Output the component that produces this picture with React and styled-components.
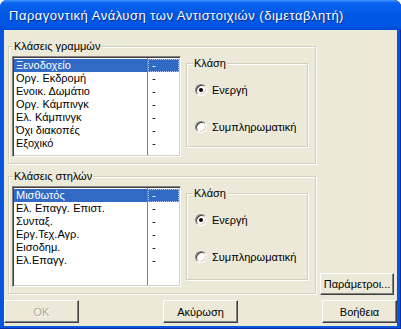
import React from 'react';
import styled, { createGlobalStyle } from 'styled-components';

const GlobalStyle = createGlobalStyle`
  html, body { margin: 0; padding: 0; background: #fff; }
  body { font-family: 'Liberation Sans', Arial, sans-serif; font-size: 11px; color: #000; }
  * { box-sizing: border-box; }
`;

const Window = styled.div`
  width: 401px;
  height: 329px;
  display: flex;
  flex-direction: column;
  background: #0855dd;
  border-radius: 7px 7px 0 0;
  overflow: hidden;
  box-shadow: inset 0 -1px 0 #0a2ea8, inset -1px 0 0 #0a2ea8;
`;

const TitleBar = styled.div`
  height: 30px;
  flex: none;
  display: flex;
  align-items: center;
  padding: 1px 0 0 9px;
  background: linear-gradient(to bottom, #3e93ff 0%, #0a63f0 10%, #0058e6 45%, #0056e4 85%, #004ad6 100%);
  color: #fff;
  font-size: 13px;
  letter-spacing: 0.5px;
  text-shadow: 1px 1px 0 #0c2a8a;
`;

const Client = styled.div`
  flex: 1;
  margin: 0 4px 4px 4px;
  background: #ece9d8;
  display: flex;
  flex-direction: column;
`;

const Main = styled.div`
  height: 270px;
  display: flex;
  padding: 16px 3px 0 4px;
`;

const LeftCol = styled.div`
  width: 308px;
  display: flex;
  flex-direction: column;
  gap: 12px;
`;

const RightCol = styled.div`
  flex: 1;
  display: flex;
  align-items: flex-end;
  justify-content: flex-end;
  padding-bottom: 5px;
`;

const Group = styled.div`
  position: relative;
  height: ${p => p.$h}px;
  width: ${p => (p.$w ? `${p.$w}px` : 'auto')};
  border: 1px solid #d0d0bf;
  box-shadow: inset 1px 1px 0 #fff, 1px 1px 0 #fff;
  display: flex;
  align-items: flex-start;
`;

const OuterGroup = styled(Group)`
  padding: 9px 7px 0 3px;
  gap: 5px;
`;

const InnerGroup = styled(Group)`
  margin-top: 7px;
  flex-direction: column;
  padding: 19px 0 0 8px;
  gap: 24px;
`;

const Legend = styled.span`
  position: absolute;
  top: -7px;
  left: ${p => p.$left}px;
  line-height: 13px;
  padding: 0 1px;
  background: #ece9d8;
`;

const ListBox = styled.div`
  width: 169px;
  height: 101px;
  background: #fff;
  border: 1px solid;
  border-color: #848284 #fff #fff #848284;
  box-shadow: inset 1px 1px 0 #404040, inset -1px -1px 0 #d4d0c8;
  padding: 1px;
  display: flex;
`;

const Column = styled.div`
  width: ${p => p.$w}px;
  height: 100%;
  border-right: ${p => (p.$divider ? '1px solid #808080' : 'none')};
  display: flex;
  flex-direction: column;
  padding-top: 1px;
`;

const Row = styled.div`
  height: 13px;
  line-height: 13px;
  padding-left: ${p => p.$pad}px;
  white-space: nowrap;
  background: ${p => (p.$selected ? '#316ac5' : 'transparent')};
  color: ${p => (p.$selected ? '#fff' : '#000')};
  outline: ${p => (p.$focus ? '1px dotted #b8c8f0' : 'none')};
  outline-offset: -1px;
`;

const RadioRow = styled.label`
  display: flex;
  align-items: center;
  gap: 5px;
  height: 13px;
`;

const RadioCircle = styled.span`
  position: relative;
  width: 12px;
  height: 12px;
  border-radius: 50%;
  background: #fff;
  border: 1px solid;
  border-color: #808080 #fff #fff #808080;
  box-shadow: inset 1px 1px 0 #404040, inset -1px -1px 0 #d4d0c8;
  &::after {
    content: '';
    display: ${p => (p.$checked ? 'block' : 'none')};
    position: absolute;
    left: 3px;
    top: 3px;
    width: 4px;
    height: 4px;
    border-radius: 50%;
    background: #000;
  }
`;

const Button = styled.button`
  width: ${p => p.$w || 75}px;
  height: ${p => p.$h || 23}px;
  padding: 0;
  font-family: 'Liberation Sans', Arial, sans-serif;
  font-size: 11px;
  background: #ece9d8;
  color: ${p => (p.disabled ? '#aca899' : '#000')};
  text-shadow: ${p => (p.disabled ? '1px 1px 0 #fff' : 'none')};
  border: 1px solid;
  border-color: #fff #404040 #404040 #fff;
  box-shadow: inset -1px -1px 0 #808080;
`;

const ButtonRow = styled.div`
  display: flex;
  justify-content: space-between;
  margin-bottom: 3px;
`;

const rows1 = ['Ξενοδοχείο', 'Οργ. Εκδρομή', 'Ενοικ. Δωμάτιο', 'Οργ. Κάμπινγκ', 'Ελ. Κάμπινγκ', 'Όχι διακοπές', 'Εξοχικό'];
const rows2 = ['Μισθωτός', 'Ελ. Επαγγ. Επιστ.', 'Συνταξ.', 'Εργ.Τεχ.Αγρ.', 'Εισοδημ.', 'Ελ.Επαγγ.'];

const ClassList = ({ items }) => (
  <ListBox>
    <Column $w={134} $divider>
      {items.map((t, i) => (
        <Row key={t} $pad={2} $selected={i === 0}>{t}</Row>
      ))}
    </Column>
    <Column $w={31}>
      {items.map((t, i) => (
        <Row key={t} $pad={4} $selected={i === 0} $focus={i === 0}>-</Row>
      ))}
    </Column>
  </ListBox>
);

const ClassChoice = ({ h }) => (
  <InnerGroup $h={h} $w={122}>
    <Legend $left={6}>Κλάση</Legend>
    <RadioRow><RadioCircle $checked />Ενεργή</RadioRow>
    <RadioRow><RadioCircle />Συμπληρωματική</RadioRow>
  </InnerGroup>
);

export default function App() {
  return (
    <>
      <GlobalStyle />
      <Window>
        <TitleBar>Παραγοντική Ανάλυση των Αντιστοιχιών (διμεταβλητή)</TitleBar>
        <Client>
          <Main>
            <LeftCol>
              <OuterGroup $h={118}>
                <Legend $left={4}>Κλάσεις γραμμών</Legend>
                <ClassList items={rows1} />
                <ClassChoice h={84} />
              </OuterGroup>
              <OuterGroup $h={118}>
                <Legend $left={4}>Κλάσεις στηλών</Legend>
                <ClassList items={rows2} />
                <ClassChoice h={87} />
              </OuterGroup>
            </LeftCol>
            <RightCol>
              <Button $w={74} $h={22}>Παράμετροι...</Button>
            </RightCol>
          </Main>
          <ButtonRow>
            <Button disabled>OK</Button>
            <Button>Ακύρωση</Button>
            <Button>Βοήθεια</Button>
          </ButtonRow>
        </Client>
      </Window>
    </>
  );
}
